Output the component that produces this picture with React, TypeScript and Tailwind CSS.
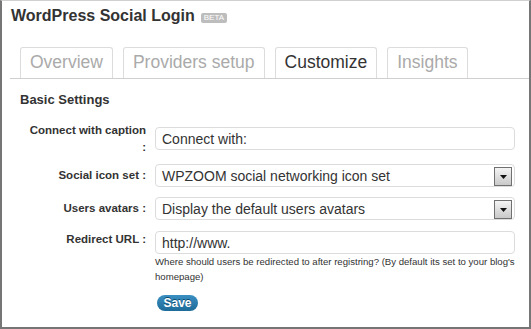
import React from "react";

function SelectArrow() {
  return (
    <div className="absolute right-[2px] top-[2px] flex h-[19px] w-[18px] items-center justify-center border border-[#707070] bg-gradient-to-b from-[#f4f4f4] to-[#c9c9c9]">
      <svg width="7" height="4" viewBox="0 0 7 4">
        <polygon points="0,0 7,0 3.5,4" fill="#111" />
      </svg>
    </div>
  );
}

function Field({ value, select }: { value: string; select?: boolean }) {
  return (
    <div className="relative flex h-[23px] w-[360px] items-center rounded-[4px] border border-[#dcdcdc] bg-white pl-[6px] text-[14px] leading-[17px] text-[#333]">
      <span className="mt-[1px]">{value}</span>
      {select && <SelectArrow />}
    </div>
  );
}

export default function App() {
  const tabs = ["Overview", "Providers setup", "Customize", "Insights"];
  return (
    <div
      className="h-[329px] w-[531px] overflow-hidden border-x-2 border-b-2 border-t border-x-[#767676] border-b-[#767676] border-t-[#d0d0d0] bg-white text-[#333]"
      style={{ fontFamily: '"Liberation Sans", Arial, sans-serif' }}
    >
      {/* Title */}
      <div className="flex items-center pl-[9px] pt-[5px]">
        <span className="text-[16px] font-bold leading-[20px] text-[#333]">
          WordPress Social Login
        </span>
        <span className="ml-[6px] mt-[4px] flex h-[10px] items-center rounded-[2px] bg-[#bdbdbd] px-[3px] text-[8px] leading-[10px] text-white">
          BETA
        </span>
      </div>

      {/* Tabs */}
      <div className="ml-[8px] mt-[21px] flex gap-[10px] border-b border-[#cfcfcf] pl-[10px]">
        {tabs.map((t) => (
          <div
            key={t}
            className={
              "rounded-t-[3px] border-x border-t border-[#dcdcdc] px-[9px] pb-[6px] pt-[4px] text-[17.5px] leading-[20px] " +
              (t === "Customize" ? "text-[#333]" : "text-[#aaaaaa]")
            }
          >
            {t}
          </div>
        ))}
      </div>

      {/* Section title */}
      <div className="mt-[13px] pl-[18px] text-[13px] font-bold leading-[16px] text-[#333]">
        Basic Settings
      </div>

      {/* Form */}
      <div className="mt-[14px] flex flex-col">
        <div className="flex gap-[9px]">
          <div className="w-[144px] text-right text-[11.5px] font-bold leading-[17px] text-[#333]">
            Connect with caption
            <br />:
          </div>
          <div className="mt-[5px]">
            <Field value="Connect with:" />
          </div>
        </div>

        <div className="mt-[8px] flex gap-[9px]">
          <div className="w-[144px] pt-[3px] text-right text-[11.5px] font-bold leading-[17px] text-[#333]">
            Social icon set :
          </div>
          <Field value="WPZOOM social networking icon set" select />
        </div>

        <div className="mt-[10px] flex gap-[9px]">
          <div className="w-[144px] pt-[3px] text-right text-[11.5px] font-bold leading-[17px] text-[#333]">
            Users avatars :
          </div>
          <Field value="Display the default users avatars" select />
        </div>

        <div className="mt-[11px] flex gap-[9px]">
          <div className="w-[144px] pt-0 text-right text-[11.5px] font-bold leading-[17px] text-[#333]">
            Redirect URL :
          </div>
          <div className="flex flex-col">
            <Field value="http://www." />
            <div className="w-[374px] whitespace-nowrap text-[9.6px] leading-[15px] text-[#333]">
              Where should users be redirected to after registring? (By default its set to your blog's
              <br />
              homepage)
            </div>
            <button className="ml-[2px] mt-[11px] flex h-[16px] w-[41px] items-center justify-center rounded-full bg-gradient-to-b from-[#3a8fc2] to-[#1d6b98] text-[12px] font-bold leading-[14px] text-white [text-shadow:0_-1px_0_#0d4a6e]">
              Save
            </button>
          </div>
        </div>
      </div>
    </div>
  );
}
